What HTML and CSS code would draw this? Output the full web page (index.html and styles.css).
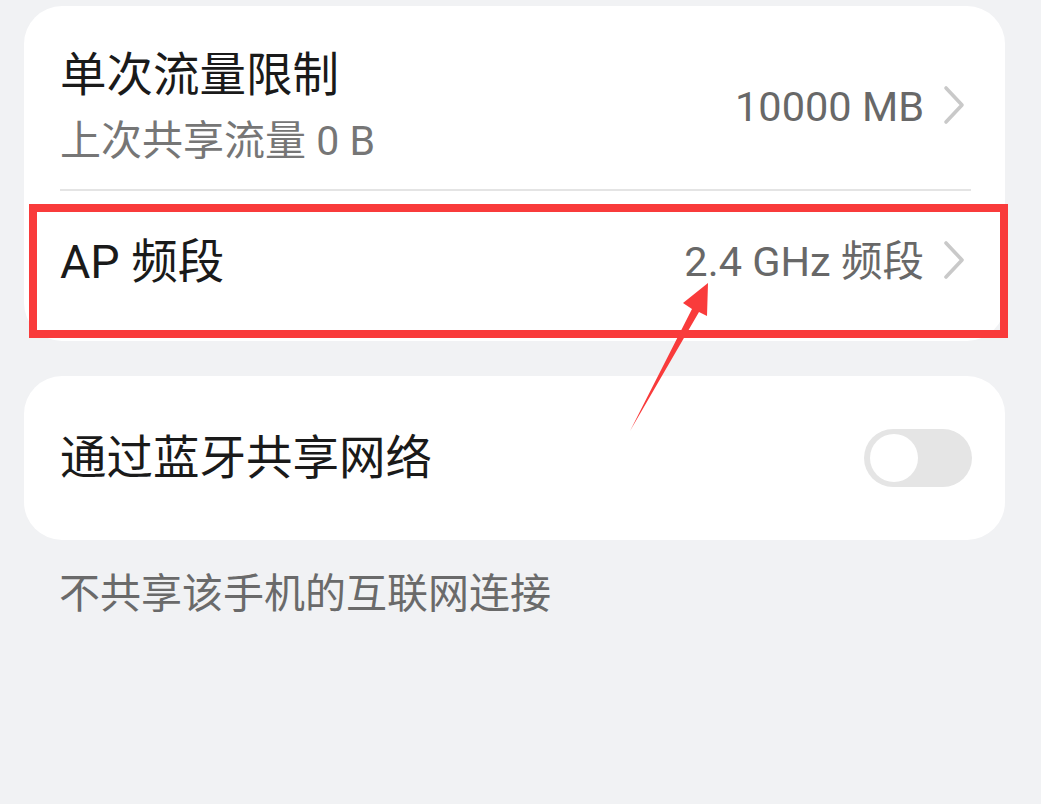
FILE: index.html
```html
<!DOCTYPE html>
<html lang="zh-CN">
<head>
<meta charset="utf-8">
<title>热点设置</title>
<link rel="stylesheet" href="styles.css">
</head>
<body>
<div class="page">
  <section class="card">
    <div class="row row-limit">
      <div class="texts">
        <div class="title">单次流量限制</div>
        <div class="subtitle">上次共享流量 0 B</div>
      </div>
      <div class="value">
        <span>10000 MB</span>
        <svg class="chev" width="22" height="40" viewBox="0 0 22 40"><path d="M3 3 L19 20 L3 37" fill="none" stroke="#c9c9c9" stroke-width="3.6" stroke-linecap="round" stroke-linejoin="round"/></svg>
      </div>
    </div>
    <div class="divider"></div>
    <div class="row row-ap">
      <div class="title">AP 频段</div>
      <div class="value">
        <span>2.4 GHz 频段</span>
        <svg class="chev" width="22" height="40" viewBox="0 0 22 40"><path d="M3 3 L19 20 L3 37" fill="none" stroke="#c9c9c9" stroke-width="3.6" stroke-linecap="round" stroke-linejoin="round"/></svg>
      </div>
    </div>
  </section>

  <section class="card card-bt">
    <div class="title">通过蓝牙共享网络</div>
    <div class="toggle"><div class="knob"></div></div>
  </section>

  <p class="footer">不共享该手机的互联网连接</p>

  <div class="highlight"></div>
  <svg class="arrow" width="1041" height="804" viewBox="0 0 1041 804">
    <polygon points="630,431 692,309 683,303 708,283 707,316 699,312" fill="#f93b3b"/>
  </svg>
</div>
</body>
</html>
```

FILE: styles.css
```css
html, body {
  margin: 0;
  padding: 0;
  background: #f1f2f4;
}

body {
  font-family: Roboto, "Noto Sans CJK SC", sans-serif;
  color: #1a1a1a;
}

.page {
  position: relative;
  width: 1041px;
  height: 804px;
  padding: 6px 36px 0 24px;
  box-sizing: border-box;
  overflow: hidden;
}

.card {
  background: #ffffff;
  border-radius: 38px;
  padding: 0 40px 0 36px;
}

.row {
  display: flex;
  align-items: center;
  justify-content: space-between;
}

.row-limit {
  padding: 41px 0 23px;
}

.row-ap {
  padding: 43px 0 51px;
}

.title {
  font-size: 46.5px;
  line-height: 56px;
  color: #1a1a1a;
}

.subtitle {
  font-size: 41px;
  line-height: 50px;
  margin-top: 13px;
  color: #767676;
}

.value {
  display: flex;
  align-items: center;
  gap: 19px;
  font-size: 41.5px;
  line-height: 50px;
  color: #686868;
}

.chev {
  display: block;
  margin-top: -4px;
}

.divider {
  height: 2px;
  background: #e4e4e4;
  margin: 0 -6px 0 0;
}

.card-bt {
  margin-top: 35px;
  height: 164px;
  display: flex;
  align-items: center;
  justify-content: space-between;
  padding-right: 33px;
}

.toggle {
  width: 108px;
  height: 58px;
  border-radius: 29px;
  background: #e5e5e5;
  box-sizing: border-box;
  padding: 5px 6px;
}

.knob {
  width: 48px;
  height: 48px;
  border-radius: 50%;
  background: #ffffff;
}

.footer {
  margin: 26px 0 0 35px;
  font-size: 41px;
  line-height: 56px;
  color: #6a6a6a;
}

.highlight {
  position: absolute;
  left: 29px;
  top: 204px;
  width: 979px;
  height: 134px;
  border: 8px solid #f93b3b;
  box-sizing: border-box;
}

.arrow {
  position: absolute;
  left: 0;
  top: 0;
}
```
